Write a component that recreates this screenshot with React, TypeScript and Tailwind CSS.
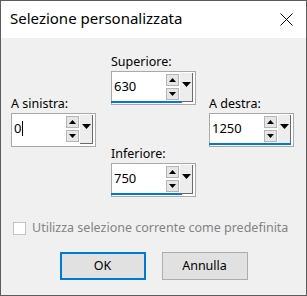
import React from 'react'

const font = { fontFamily: '"Noto Sans", "Open Sans", sans-serif' }

function Tri({ down = false, big = false }: { down?: boolean; big?: boolean }) {
  const w = big ? 9 : 7
  const h = big ? 5 : 4
  return (
    <svg width={w} height={h} viewBox={`0 0 ${w} ${h}`} className="block">
      {down ? (
        <path d={`M0 0 H${w} L${w / 2} ${h} Z`} fill="#000" />
      ) : (
        <path d={`M0 ${h} H${w} L${w / 2} 0 Z`} fill="#000" />
      )}
    </svg>
  )
}

function SpinField({
  value,
  caret = false,
  bar = 'part',
}: {
  value: string
  caret?: boolean
  bar?: 'part' | 'full' | 'none'
}) {
  return (
    <div className="relative w-[85px] h-[34px] border border-[#a9a9a9] bg-white flex">
      <div className="flex flex-col w-[68px]">
        <div className="flex flex-1">
          <div className="flex-1 flex items-center pl-[2px] text-[13px] text-black">
            <span>{value}</span>
            {caret && <span className="inline-block w-px h-[15px] bg-black ml-px" />}
          </div>
          <div className="flex flex-col gap-[2px] pt-[2px] pr-[1px]">
            <div className="w-[13px] h-[12px] bg-[#e6e6e6] border border-[#b5b5b5] flex items-center justify-center">
              <Tri />
            </div>
            <div className="w-[13px] h-[12px] bg-[#e6e6e6] border border-[#b5b5b5] flex items-center justify-center">
              <Tri down />
            </div>
          </div>
        </div>
        {bar === 'part' ? (
          <div className="h-[2px] bg-[#0078d7] ml-[-1px] w-[71px] mb-px" />
        ) : (
          <div className="h-[2px] mb-px" />
        )}
      </div>
      <div className="mt-px w-[13px] h-[29px] bg-[#ededed] border-r border-b border-[#6a6a6a] flex justify-center pt-[9px]">
        <Tri down big />
      </div>
      {bar === 'full' && (
        <div className="absolute left-[-1px] right-[2px] bottom-px h-[2px] bg-[#0078d7]" />
      )}
    </div>
  )
}

function Field({ label, value, caret, bar }: { label: string; value: string; caret?: boolean; bar?: 'part' | 'full' | 'none' }) {
  return (
    <div className="flex flex-col">
      <div className="h-[17px] text-[12.5px] leading-[16px] text-black">{label}</div>
      <SpinField value={value} caret={caret} bar={bar} />
    </div>
  )
}

export default function App() {
  return (
    <div className="w-[307px] h-[296px] border border-[#5c5c5c] bg-[#f0f0f0] flex flex-col overflow-hidden" style={font}>
      <div className="h-[37px] bg-white flex items-center justify-between pl-[9px] pr-[13px]">
        <span className="text-[15px] text-black leading-none pb-[2px]">Selezione personalizzata</span>
        <svg width="13" height="13" viewBox="0 0 13 13">
          <path d="M0.5 0.5 L12.5 12.5 M12.5 0.5 L0.5 12.5" stroke="#000" strokeWidth="1" />
        </svg>
      </div>

      <div className="flex pl-[10px] pt-[16px]">
        <div className="mt-[42px]">
          <Field label="A sinistra:" value="0" caret bar="none" />
        </div>
        <div className="ml-[15px] flex flex-col gap-[41px]">
          <Field label="Superiore:" value="630" />
          <Field label="Inferiore:" value="750" />
        </div>
        <div className="ml-[13px] mt-[42px]">
          <Field label="A destra:" value="1250" bar="full" />
        </div>
      </div>

      <div className="flex items-center mt-[24px] pl-[12px] h-[14px]">
        <div className="w-[13px] h-[13px] border border-[#c4c4c4] bg-white" />
        <span className="ml-[6px] text-[12.5px] text-[#838383]">Utilizza selezione corrente come predefinita</span>
      </div>

      <div className="flex justify-center gap-[16px] mt-[17px]">
        <button className="w-[86px] h-[28px] bg-[#e1e1e1] border-2 border-[#0078d7] text-[12.5px] text-black">OK</button>
        <button className="w-[86px] h-[28px] bg-[#e1e1e1] border border-[#adadad] text-[12.5px] text-black">Annulla</button>
      </div>
    </div>
  )
}
